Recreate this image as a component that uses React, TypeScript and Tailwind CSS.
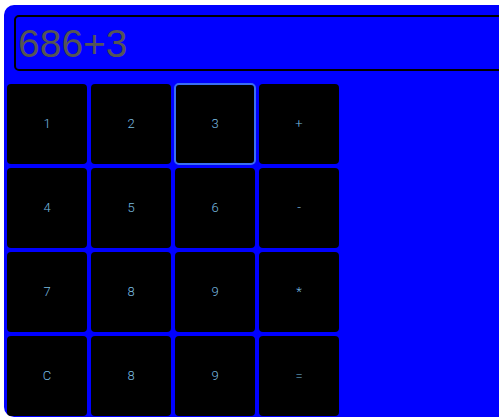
import React from "react";

const keys = ["1", "2", "3", "+", "4", "5", "6", "-", "7", "8", "9", "*", "C", "8", "9", "="];

export default function App() {
  return (
    <div className="w-[499px] h-[418px] overflow-hidden bg-white">
      <div className="ml-[4px] mt-[5px] w-[620px] h-[412px] bg-[#0000ff] rounded-l-[10px] flex flex-col">
        <div className="ml-[10px] mt-[10px] w-[590px] h-[56px] border-2 border-black rounded-[5px] flex items-center pl-[2px]">
          <span
            className="text-[39px] leading-none text-[#555555]"
            style={{ fontFamily: '"Liberation Sans", sans-serif' }}
          >
            686+3
          </span>
        </div>
        <div className="ml-[3px] mt-[13px] grid grid-cols-[repeat(4,80px)] grid-rows-[repeat(4,80px)] gap-[4px] w-fit">
          {keys.map((k, i) => (
            <button
              key={i}
              className={
                "bg-black rounded-[4px] flex items-center justify-center text-[13px] font-light text-[#7abde0] " +
                (i === 2 ? "outline-2 outline-solid outline-[#3a6ef2] -outline-offset-1" : "")
              }
              style={{ fontFamily: 'Roboto, sans-serif' }}
            >
              {k}
            </button>
          ))}
        </div>
      </div>
    </div>
  );
}
